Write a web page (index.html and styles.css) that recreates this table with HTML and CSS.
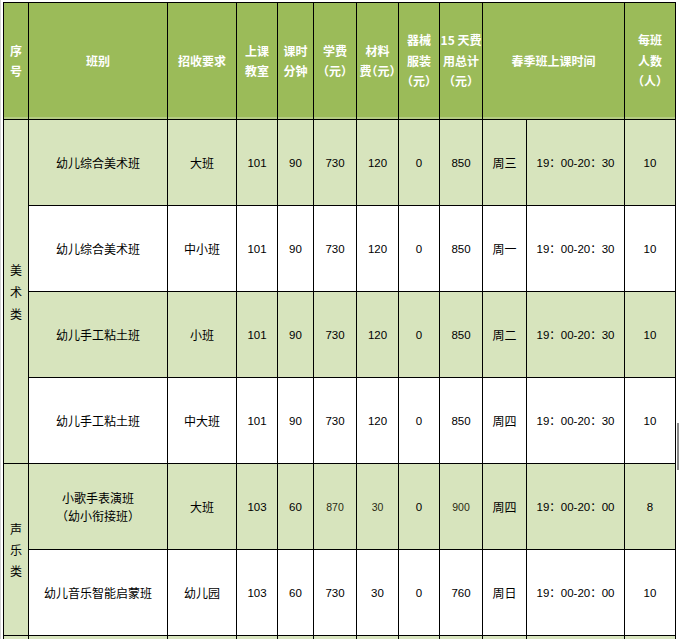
FILE: index.html
```html
<!DOCTYPE html>
<html lang="zh-CN">
<head>
<meta charset="utf-8">
<title>春季班课程表</title>
<link rel="stylesheet" href="styles.css">
</head>
<body>
<div class="page">
  <table class="sched">
    <colgroup>
      <col class="c-no">
      <col class="c-name">
      <col class="c-req">
      <col class="c-room">
      <col class="c-min">
      <col class="c-fee">
      <col class="c-mat">
      <col class="c-eq">
      <col class="c-tot">
      <col class="c-day">
      <col class="c-time">
      <col class="c-cap">
    </colgroup>
    <thead>
      <tr class="head">
        <th>序<br>号</th>
        <th>班别</th>
        <th>招收要求</th>
        <th>上课<br>教室</th>
        <th>课时<br>分钟</th>
        <th>学费<br>（元）</th>
        <th>材料<br>费（元）</th>
        <th>器械<br>服装<br>（元）</th>
        <th>15 天费<br>用总计<br>（元）</th>
        <th colspan="2">春季班上课时间</th>
        <th>每班<br>人数<br>（人）</th>
      </tr>
    </thead>
    <tbody>
      <tr class="alt">
        <td class="cat" rowspan="4">美<br>术<br>类</td>
        <td>幼儿综合美术班</td>
        <td>大班</td>
        <td class="num">101</td>
        <td class="num">90</td>
        <td class="num">730</td>
        <td class="num">120</td>
        <td class="num">0</td>
        <td class="num">850</td>
        <td>周三</td>
        <td class="num">19：00-20：30</td>
        <td class="num">10</td>
      </tr>
      <tr>
        <td>幼儿综合美术班</td>
        <td>中小班</td>
        <td class="num">101</td>
        <td class="num">90</td>
        <td class="num">730</td>
        <td class="num">120</td>
        <td class="num">0</td>
        <td class="num">850</td>
        <td>周一</td>
        <td class="num">19：00-20：30</td>
        <td class="num">10</td>
      </tr>
      <tr class="alt">
        <td>幼儿手工粘土班</td>
        <td>小班</td>
        <td class="num">101</td>
        <td class="num">90</td>
        <td class="num">730</td>
        <td class="num">120</td>
        <td class="num">0</td>
        <td class="num">850</td>
        <td>周二</td>
        <td class="num">19：00-20：30</td>
        <td class="num">10</td>
      </tr>
      <tr>
        <td>幼儿手工粘土班</td>
        <td>中大班</td>
        <td class="num">101</td>
        <td class="num">90</td>
        <td class="num">730</td>
        <td class="num">120</td>
        <td class="num">0</td>
        <td class="num">850</td>
        <td>周四</td>
        <td class="num">19：00-20：30</td>
        <td class="num">10</td>
      </tr>
      <tr class="alt">
        <td class="cat cat-voice" rowspan="2">声<br>乐<br>类</td>
        <td class="two">小歌手表演班<br>（幼小衔接班）</td>
        <td>大班</td>
        <td class="num">103</td>
        <td class="num">60</td>
        <td class="num small">870</td>
        <td class="num small">30</td>
        <td class="num">0</td>
        <td class="num small">900</td>
        <td>周四</td>
        <td class="num">19：00-20：00</td>
        <td class="num">8</td>
      </tr>
      <tr>
        <td>幼儿音乐智能启蒙班</td>
        <td>幼儿园</td>
        <td class="num">103</td>
        <td class="num">60</td>
        <td class="num">730</td>
        <td class="num">30</td>
        <td class="num">0</td>
        <td class="num">760</td>
        <td>周日</td>
        <td class="num">19：00-20：00</td>
        <td class="num">10</td>
      </tr>
      <tr class="alt">
        <td class="cat"></td>
        <td></td><td></td><td></td><td></td><td></td><td></td>
        <td></td><td></td><td></td><td></td><td></td>
      </tr>
    </tbody>
  </table>
  <div class="scroll-thumb"></div>
</div>
</body>
</html>
```

FILE: styles.css
```css
html, body {
  margin: 0;
  padding: 0;
  background: #ffffff;
  overflow: hidden;
}

body {
  font-family: "Noto Sans CJK SC", "Liberation Sans", sans-serif;
  font-size: 12px;
  color: #000000;
}

.page {
  position: relative;
  height: 639px;
  padding: 2px 0 0 2px;
  border-left: 1px solid #d4d4d4;
  box-sizing: border-box;
}

.sched {
  border-collapse: collapse;
  table-layout: fixed;
  width: 672px;
}

.c-no   { width: 25px; }
.c-name { width: 139px; }
.c-req  { width: 69px; }
.c-room { width: 41px; }
.c-min  { width: 36px; }
.c-fee  { width: 43px; }
.c-mat  { width: 42px; }
.c-eq   { width: 41px; }
.c-tot  { width: 43px; }
.c-day  { width: 44px; }
.c-time { width: 98px; }
.c-cap  { width: 51px; }

.sched th,
.sched td {
  border: 1px solid #000000;
  padding: 0;
  text-align: center;
  vertical-align: middle;
  overflow: hidden;
  white-space: nowrap;
}

.head {
  height: 117px;
}

.head th {
  background: #9bbb59;
  color: #ffffff;
  font-weight: 700;
  font-size: 12px;
  line-height: 20.5px;
  font-feature-settings: "halt";
  box-shadow: inset 0 -2px 0 #b5cc84;
}

.sched tbody tr {
  height: 86px;
  background: #ffffff;
}

.sched tbody tr.alt {
  background: #d7e4bd;
}

.sched td {
  line-height: 18px;
}

.sched td.cat {
  background: #d7e4bd;
  line-height: 22px;
  font-size: 12px;
}

.sched td.cat-voice {
  line-height: 21px;
}

.num {
  font-family: "Liberation Sans", "Noto Sans CJK SC", sans-serif;
  font-size: 11.5px;
}

.num.small {
  font-size: 10.5px;
  color: #2a2a12;
}

.scroll-thumb {
  position: absolute;
  left: 676px;
  top: 423px;
  width: 3px;
  height: 47px;
  background: #8c8c8c;
}
```
